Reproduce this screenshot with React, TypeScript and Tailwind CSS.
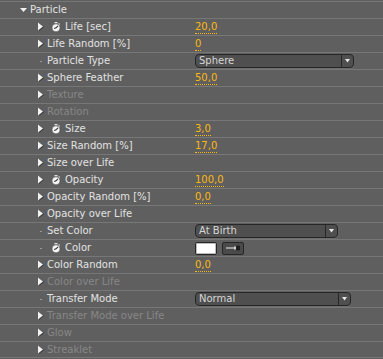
import * as React from "react";

type Row = {
  label: string;
  kind?: "expand" | "dot";
  watch?: boolean;
  disabled?: boolean;
  value?: string;
  select?: "sphere" | "birth" | "normal";
  color?: boolean;
};

const rows: Row[] = [
  { label: "Life [sec]", kind: "expand", watch: true, value: "20,0" },
  { label: "Life Random [%]", kind: "expand", value: "0" },
  { label: "Particle Type", kind: "dot", select: "sphere" },
  { label: "Sphere Feather", kind: "expand", value: "50,0" },
  { label: "Texture", kind: "expand", disabled: true },
  { label: "Rotation", kind: "expand", disabled: true },
  { label: "Size", kind: "expand", watch: true, value: "3,0" },
  { label: "Size Random [%]", kind: "expand", value: "17,0" },
  { label: "Size over Life", kind: "expand" },
  { label: "Opacity", kind: "expand", watch: true, value: "100,0" },
  { label: "Opacity Random [%]", kind: "expand", value: "0,0" },
  { label: "Opacity over Life", kind: "expand" },
  { label: "Set Color", kind: "dot", select: "birth" },
  { label: "Color", kind: "dot", watch: true, color: true },
  { label: "Color Random", kind: "expand", value: "0,0" },
  { label: "Color over Life", kind: "expand", disabled: true },
  { label: "Transfer Mode", kind: "dot", select: "normal" },
  { label: "Transfer Mode over Life", kind: "expand", disabled: true },
  { label: "Glow", kind: "expand", disabled: true },
  { label: "Streaklet", kind: "expand", disabled: true },
];

function ExpandArrow() {
  return (
    <svg width="7" height="10" viewBox="0 0 7 10" className="block">
      <polygon points="1,1 6,5 1,9" fill="#262626" opacity="0.7" />
      <polygon points="0,0.5 5,4.5 0,8.5" fill="#f2f2f2" />
    </svg>
  );
}

function Stopwatch() {
  return (
    <svg width="10" height="10" viewBox="0 0 10 10" className="block">
      <rect x="3.5" y="0" width="3" height="1.4" fill="#e0e0e0" />
      <rect x="7.3" y="1.3" width="1.5" height="1.5" fill="#cfcfcf" />
      <circle cx="5" cy="5.8" r="4" fill="#f6f6f6" stroke="#3c3c3c" strokeWidth="0.5" />
      <line x1="5" y1="5.8" x2="7" y2="3.8" stroke="#2e2e2e" strokeWidth="1.1" />
      <line x1="5" y1="5.8" x2="3.2" y2="6.6" stroke="#2e2e2e" strokeWidth="1.1" />
    </svg>
  );
}

function Select({ text, className }: { text: string; className: string }) {
  return (
    <div
      className={`flex h-[14px] items-stretch rounded-[4px] border border-[#262626] bg-[#4f4f4f] shadow-[0_1px_0_#6d6d6d] ${className}`}
    >
      <div className="flex-1 pl-[3px] text-[10px] leading-[12px] text-[#d6d6d6]">{text}</div>
      <div className="flex w-[12px] items-center justify-center border-l border-[#262626]">
        <svg width="5" height="4" viewBox="0 0 5 4" className="block">
          <polygon points="0,0 5,0 2.5,3.5" fill="#e8e8e8" />
        </svg>
      </div>
    </div>
  );
}

function ColorControl() {
  return (
    <div className="flex items-center gap-[5px]">
      <div className="h-[13px] w-[22px] rounded-[2px] border border-[#262626] bg-white shadow-[inset_0_0_0_1px_#bdbdbd]" />
      <div className="flex h-[13px] w-[22px] items-center justify-center rounded-[2px] border border-[#262626] bg-[#4a4a4a]">
        <svg width="16" height="6" viewBox="0 0 16 6" className="block">
          <rect x="1" y="2.5" width="9" height="1" fill="#ececec" />
          <rect x="9" y="1.5" width="2" height="3" fill="#d0d0d0" />
          <rect x="11" y="0.5" width="4" height="5" rx="1.2" fill="#1e1e1e" />
        </svg>
      </div>
    </div>
  );
}

export default function App() {
  return (
    <div
      className="h-[359px] w-[383px] overflow-hidden bg-[#5f5f5f] pt-[1px] text-[10px] text-[#e2e2e2]"
      style={{ fontFamily: '"DejaVu Sans", Verdana, sans-serif' }}
    >
      <div className="flex h-[17px] items-center border-t border-[#777777] pl-[20px]">
        <svg width="7" height="5" viewBox="0 0 7 5" className="mr-[3px] block">
          <polygon points="0,0 7,0 3.5,4" fill="#f0f0f0" />
        </svg>
        <span className="leading-[16px]">Particle</span>
      </div>
      {rows.map((r, i) => (
        <div
          key={i}
          className={`flex h-[17px] border-t border-[#777777] ${i === rows.length - 1 ? "border-b" : ""}`}
        >
          <div className="flex w-[195px] items-center pl-[38px]">
            <div className="flex w-[9px] items-center">
              {r.kind === "expand" ? (
                <ExpandArrow />
              ) : (
                <div className="ml-[2px] h-[1px] w-[2px] bg-[#9a9a9a]" />
              )}
            </div>
            {r.watch && (
              <div className="ml-[4px] mr-[4px]">
                <Stopwatch />
              </div>
            )}
            <span className={`leading-[16px] ${r.disabled ? "text-[#878787]" : "text-[#e2e2e2]"}`}>
              {r.label}
            </span>
          </div>
          <div className="flex flex-1 items-center">
            {r.value && (
              <span className="mt-[1px] inline-block border-b border-dotted border-[#fbb811] leading-[12px] text-[#fbb811]">
                {r.value}
              </span>
            )}
            {r.select === "sphere" && <Select text="Sphere" className="w-[159px]" />}
            {r.select === "birth" && <Select text="At Birth" className="w-[143px]" />}
            {r.select === "normal" && <Select text="Normal" className="w-[156px]" />}
            {r.color && <ColorControl />}
          </div>
        </div>
      ))}
    </div>
  );
}
